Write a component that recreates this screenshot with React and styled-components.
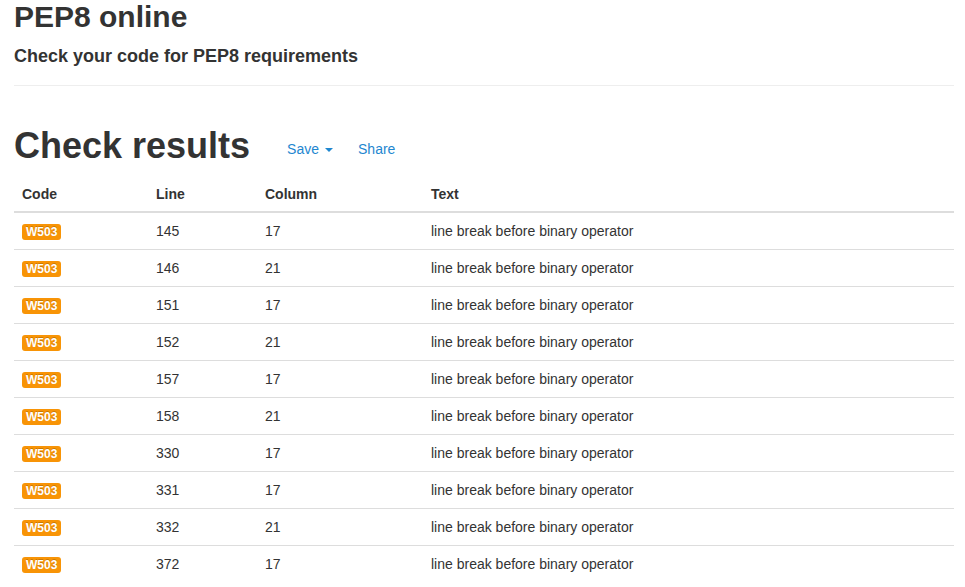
import React from "react";
import styled, { createGlobalStyle } from "styled-components";

const GlobalStyle = createGlobalStyle`
  html, body {
    margin: 0;
    padding: 0;
    background: #fff;
  }
  body {
    font-family: "Liberation Sans", Arial, sans-serif;
    font-size: 14px;
    line-height: 20px;
    color: #333;
  }
`;

const Container = styled.div`
  padding: 0 11px 0 14px;
`;

const Title = styled.h2`
  margin: 0;
  font-size: 30px;
  line-height: 33px;
  font-weight: bold;
`;

const Subtitle = styled.h4`
  margin: 13px 0 0;
  font-size: 18px;
  line-height: 20px;
  font-weight: bold;
`;

const Rule = styled.hr`
  margin: 19px 0 40px;
  border: 0;
  border-top: 1px solid #eee;
`;

const ResultsHeader = styled.div`
  display: flex;
  align-items: center;
  margin-bottom: 10px;
`;

const Heading = styled.h1`
  margin: 0;
  font-size: 36px;
  line-height: 40px;
  font-weight: bold;
`;

const Actions = styled.div`
  display: flex;
  gap: 25px;
  margin: 6px 0 0 37px;
`;

const ActionLink = styled.a`
  color: #1f87d0;
  text-decoration: none;
  font-size: 14px;
  line-height: 20px;
  cursor: pointer;
  display: inline-flex;
  align-items: center;
`;

const Caret = styled.span`
  display: inline-block;
  width: 0;
  height: 0;
  margin-left: 6px;
  margin-top: 1px;
  border-top: 4px solid #1f87d0;
  border-left: 4px solid transparent;
  border-right: 4px solid transparent;
`;

const Table = styled.table`
  width: 100%;
  border-collapse: collapse;
  border-spacing: 0;
  table-layout: fixed;
`;

const Th = styled.th`
  text-align: left;
  font-weight: bold;
  padding: 8px 8px 7px;
  border-bottom: 2px solid #ddd;
  width: ${(p) => p.$w || "auto"};
`;

const Td = styled.td`
  padding: 8px;
  border-top: 1px solid #ddd;
  vertical-align: top;
`;

const Row = styled.tr`
  &:first-child ${Td} {
    border-top: 0;
  }
`;

const Label = styled.span`
  display: inline-block;
  padding: 1px 4px;
  font-size: 12px;
  font-weight: bold;
  line-height: 14px;
  color: #fff;
  background: #f89406;
  border-radius: 3px;
  text-shadow: 0 -1px 0 rgba(0, 0, 0, 0.2);
  vertical-align: middle;
`;

const results = [
  ["145", "17"],
  ["146", "21"],
  ["151", "17"],
  ["152", "21"],
  ["157", "17"],
  ["158", "21"],
  ["330", "17"],
  ["331", "17"],
  ["332", "21"],
  ["372", "17"],
];

export default function App() {
  return (
    <>
      <GlobalStyle />
      <Container>
        <Title>PEP8 online</Title>
        <Subtitle>Check your code for PEP8 requirements</Subtitle>
        <Rule />
        <ResultsHeader>
          <Heading>Check results</Heading>
          <Actions>
            <ActionLink>
              Save <Caret />
            </ActionLink>
            <ActionLink>Share</ActionLink>
          </Actions>
        </ResultsHeader>
        <Table>
          <thead>
            <tr>
              <Th $w="118px">Code</Th>
              <Th $w="93px">Line</Th>
              <Th $w="150px">Column</Th>
              <Th>Text</Th>
            </tr>
          </thead>
          <tbody>
            {results.map(([line, col], i) => (
              <Row key={i}>
                <Td>
                  <Label>W503</Label>
                </Td>
                <Td>{line}</Td>
                <Td>{col}</Td>
                <Td>line break before binary operator</Td>
              </Row>
            ))}
          </tbody>
        </Table>
      </Container>
    </>
  );
}
